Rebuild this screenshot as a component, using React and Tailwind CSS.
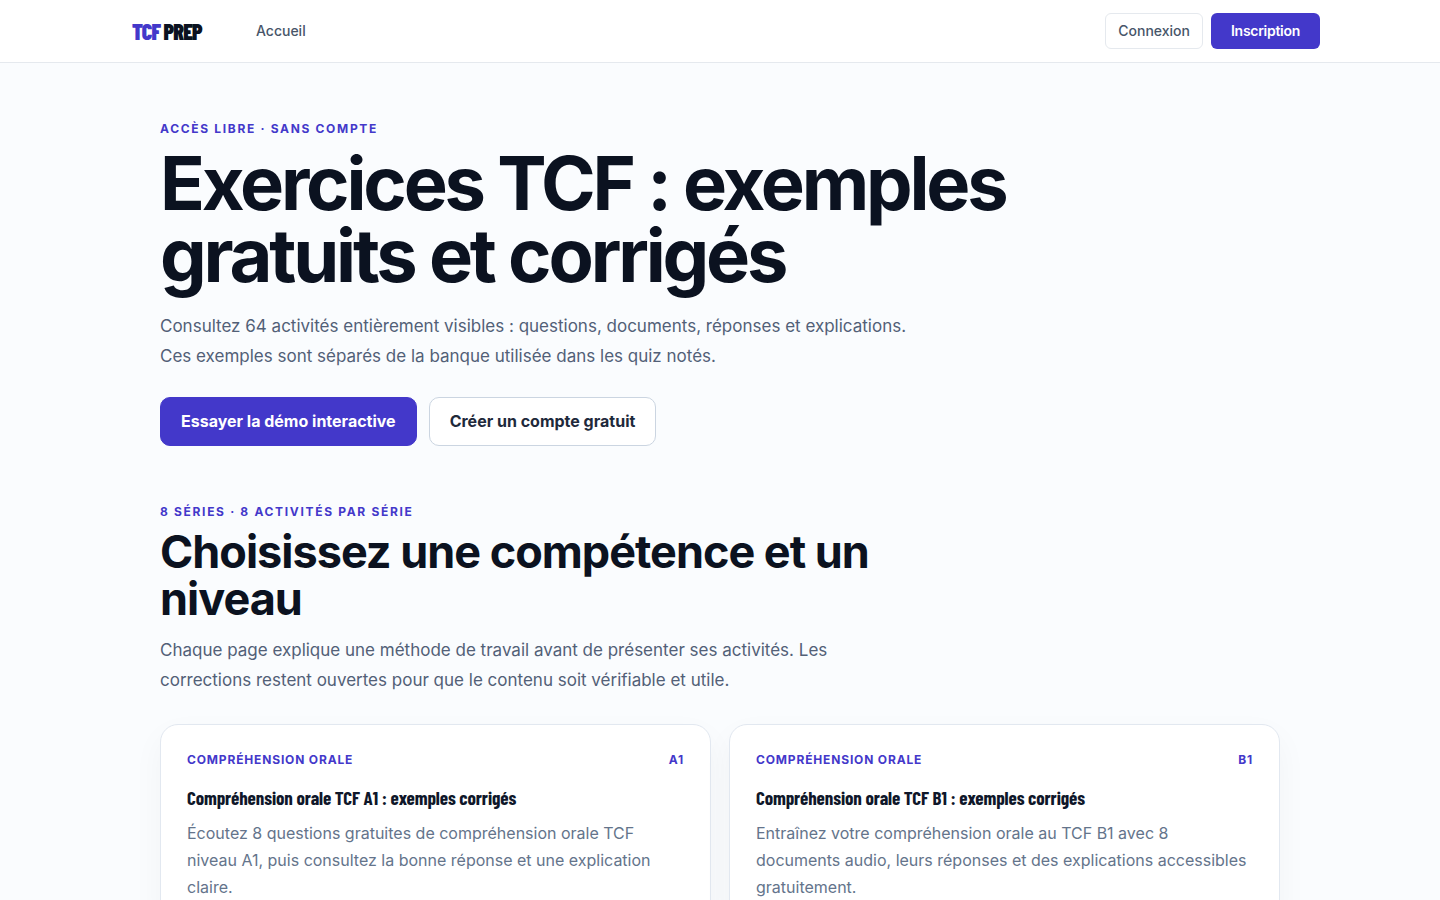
const series = [
  {
    skill: "Compréhension orale",
    level: "A1",
    title: "Compréhension orale TCF A1 : exemples corrigés",
    text: "Écoutez 8 questions gratuites de compréhension orale TCF niveau A1, puis consultez la bonne réponse et une explication claire.",
  },
  {
    skill: "Compréhension orale",
    level: "B1",
    title: "Compréhension orale TCF B1 : exemples corrigés",
    text: "Entraînez votre compréhension orale au TCF B1 avec 8 documents audio, leurs réponses et des explications accessibles gratuitement.",
  },
];

function Header() {
  return (
    <header className="border-b border-[#e5e9ee] bg-white">
      <div className="mx-auto flex h-[62px] max-w-[1200px] items-center justify-between">
        <div className="flex items-center">
          <a
            href="#"
            className="w-[124px] pl-3 font-['Barlow_Condensed','Liberation_Sans_Narrow','Roboto_Condensed',sans-serif] text-[22px] leading-6 font-black tracking-[-0.04em] whitespace-nowrap text-[#0b1220]"
          >
            <span className="text-[#4338ca]">TCF</span> PREP
          </a>
          <nav className="flex pl-3">
            <a href="#" className="text-sm font-medium text-[#475569]">
              Accueil
            </a>
          </nav>
        </div>
        <div className="flex gap-2">
          <a
            href="#"
            className="flex h-9 items-center rounded-md border border-[#e5e9ee] px-3 text-sm font-medium text-[#475569]"
          >
            Connexion
          </a>
          <a
            href="#"
            className="flex h-9 items-center rounded-md bg-[#4338ca] px-5 text-sm font-semibold tracking-[-0.02em] text-white"
          >
            Inscription
          </a>
        </div>
      </div>
    </header>
  );
}

function Eyebrow({ children }) {
  return (
    <p className="text-xs leading-5 font-bold tracking-[0.14em] text-[#4338ca] uppercase">
      {children}
    </p>
  );
}

function SeriesCard({ skill, level, title, text }) {
  return (
    <article className="rounded-[18px] border border-[#e2e8f0] bg-white p-[26px] shadow-[0_12px_32px_rgba(15,23,42,0.04)]">
      <div className="flex justify-between text-xs leading-[18px] font-bold tracking-[0.07em] text-[#4338ca] uppercase">
        <span>{skill}</span>
        <span>{level}</span>
      </div>
      <h3 className="mt-[17px] font-['Barlow_Condensed','Liberation_Sans_Narrow','Roboto_Condensed',sans-serif] text-[19px] leading-6 font-bold tracking-[-0.005em] text-[#0f172a]">
        {title}
      </h3>
      <p className="mt-2.5 text-base leading-[27px] text-[#64748b]">{text}</p>
    </article>
  );
}

export default function App() {
  return (
    <div className="min-h-screen bg-[#fafcfe] font-['Inter',sans-serif] text-[#0b1220]">
      <Header />
      <main className="mx-auto max-w-[1200px] px-10 pt-14 pb-16">
        <section>
          <Eyebrow>Accès libre · sans compte</Eyebrow>
          <h1 className="mt-2 max-w-[900px] text-[74px] leading-[72px] font-bold tracking-[-0.043em]">
            Exercices TCF : exemples gratuits et corrigés
          </h1>
          <p className="mt-5 max-w-[760px] text-[17px] leading-[30px] text-[#526077]">
            Consultez 64 activités entièrement visibles : questions, documents, réponses et
            explications. Ces exemples sont séparés de la banque utilisée dans les quiz notés.
          </p>
          <div className="mt-[26px] flex flex-wrap gap-3">
            <a
              href="#"
              className="rounded-[10px] border border-[#4338ca] bg-[#4338ca] px-5 pt-[11px] pb-3 text-base font-bold text-white"
            >
              Essayer la démo interactive
            </a>
            <a
              href="#"
              className="rounded-[10px] border border-[#cbd5e1] bg-white px-5 pt-[11px] pb-3 text-base font-bold text-[#1e293b]"
            >
              Créer un compte gratuit
            </a>
          </div>
        </section>
        <section className="mt-14">
          <Eyebrow>8 séries · 8 activités par série</Eyebrow>
          <h2 className="mt-1.5 max-w-[720px] text-[45px] leading-[47px] font-bold tracking-[-1px]">
            Choisissez une compétence et un niveau
          </h2>
          <p className="mt-[13px] max-w-[720px] text-[17px] leading-[30px] text-[#526077]">
            Chaque page explique une méthode de travail avant de présenter ses activités. Les
            corrections restent ouvertes pour que le contenu soit vérifiable et utile.
          </p>
          <div className="mt-[29px] grid gap-[18px] md:grid-cols-2">
            {series.map((item) => (
              <SeriesCard key={item.level} {...item} />
            ))}
          </div>
        </section>
      </main>
    </div>
  );
}
